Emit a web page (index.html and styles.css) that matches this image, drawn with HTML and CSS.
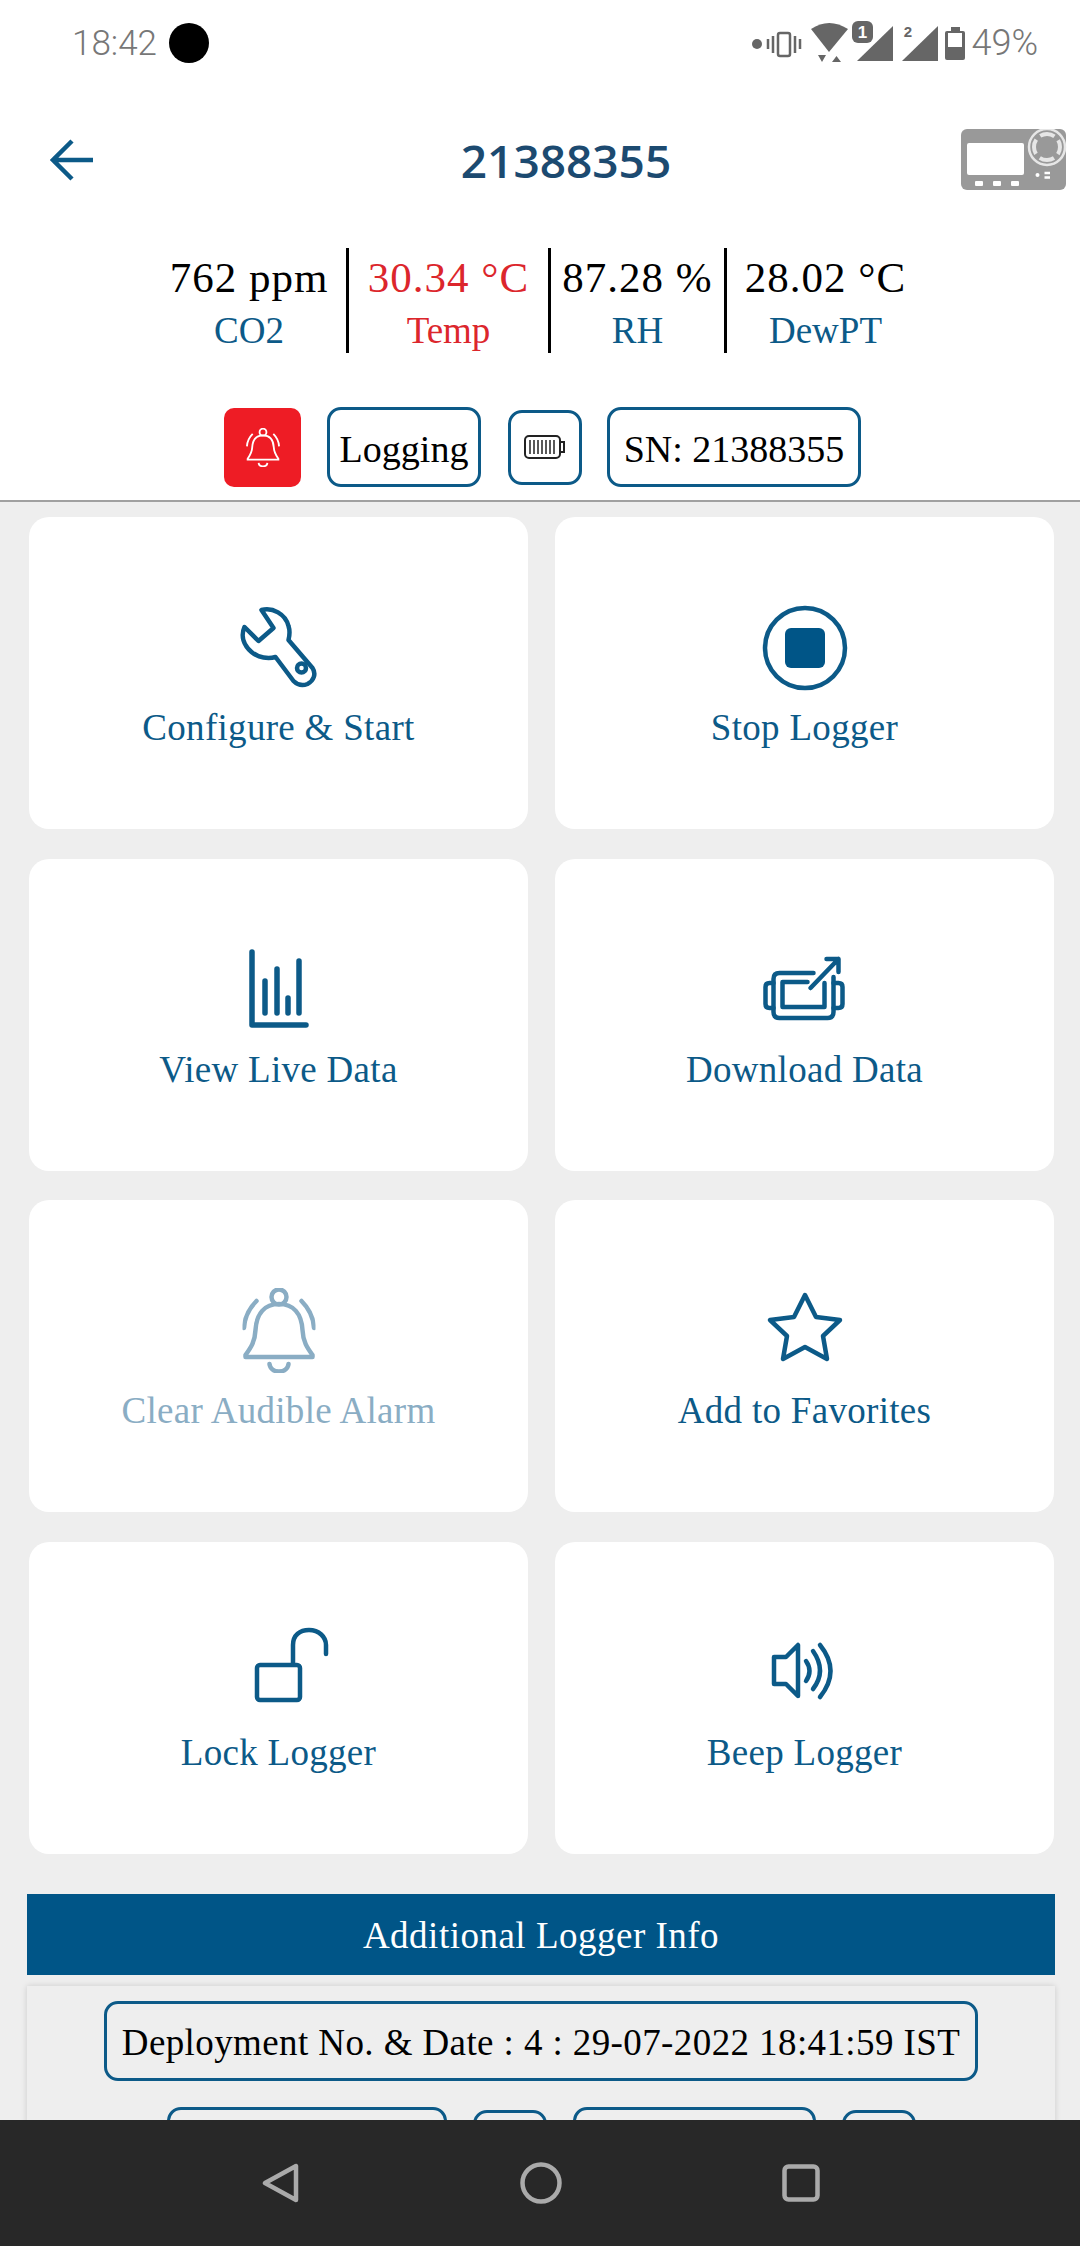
FILE: index.html
```html
<!DOCTYPE html>
<html>
<head>
    <title>21388355</title>
    <link rel="stylesheet" href="styles.css">
</head>
<body>
    <svg class="defs" width="0" height="0">
        <symbol id="bell" viewBox="0 0 73 85">
            <circle cx="36.5" cy="9" r="7.5"/>
            <path d="M36.5 16C22 16 14 26 13 42C12.5 54 8 60 3 67V69H70V67C65 60 60.5 54 60 42C59 26 51 16 36.5 16Z"/>
            <path d="M27 76C28 86 45 86 46 76"/>
            <path d="M14 13C6 21 2 30 1.5 40M59 13C67 21 71 30 71.5 40"/>
        </symbol>
    </svg>

    <div class="phone">
        <header class="top">
            <div class="statusbar">
                <div class="status-left">
                    <span class="clock">18:42</span>
                    <span class="dot"></span>
                </div>
                <div class="status-right">
                    <svg class="status-icons" width="216" height="44" viewBox="752 20 216 44">
                        <circle cx="757" cy="43" r="5" fill="#666"/>
                        <path d="M768 38V48M773 35V52M795 35V52M800 38V48" stroke="#666" stroke-width="2.5" fill="none"/>
                        <rect x="778" y="32" width="12" height="23" rx="2" stroke="#666" stroke-width="2.5" fill="none"/>
                        <path d="M811 28Q829 16 848 28L829 51Z" fill="#666"/>
                        <path d="M818 54H826L822 61ZM832 61L836.5 55L841 61Z" fill="#666"/>
                        <rect x="852" y="20" width="21" height="22" rx="6" fill="#666"/>
                        <text class="sim-one" x="862.5" y="37">1</text>
                        <path d="M893 25V60H857Z" fill="#666"/>
                        <text class="sim-two" x="908" y="36">2</text>
                        <path d="M938 25V60H902Z" fill="#666"/>
                        <rect x="945" y="30" width="20" height="29" rx="2" fill="#666"/>
                        <rect x="951" y="26" width="9" height="5" fill="#666"/>
                        <rect x="948" y="32" width="14" height="14" fill="#fff"/>
                    </svg>
                    <span class="battery-text">49%</span>
                </div>
            </div>

            <nav class="titlebar">
                <svg class="back" width="44" height="42" viewBox="0 0 44 42">
                    <path d="M43 21H4M22 2L3 21L22 40" stroke="#0c5a88" stroke-width="4.5" fill="none"/>
                </svg>
                <h1 class="title">21388355</h1>
                <svg class="device" width="106" height="62" viewBox="0 0 106 62">
                    <rect width="105" height="61" rx="6" fill="#999"/>
                    <rect x="6" y="14" width="57" height="32" rx="2" fill="#fff"/>
                    <circle cx="86" cy="18" r="18" fill="#999" stroke="#e6e6e6" stroke-width="2.5"/>
                    <circle cx="86" cy="18" r="13" fill="none" stroke="#e6e6e6" stroke-width="4" stroke-dasharray="15 5.42" stroke-dashoffset="7.5"/>
                    <rect x="14" y="52" width="8" height="5" rx="1" fill="#fff"/>
                    <rect x="32" y="52" width="8" height="5" rx="1" fill="#fff"/>
                    <rect x="50" y="52" width="8" height="5" rx="1" fill="#fff"/>
                    <circle cx="76.5" cy="46" r="2" fill="#fff"/>
                    <path d="M83.5 44H89M83.5 48.5H89" stroke="#fff" stroke-width="2.5"/>
                </svg>
            </nav>

            <div class="readings">
                <div class="reading">
                    <div class="value">762 ppm</div>
                    <div class="name">CO2</div>
                </div>
                <div class="reading alarm">
                    <div class="value">30.34 °C</div>
                    <div class="name">Temp</div>
                </div>
                <div class="reading">
                    <div class="value">87.28 %</div>
                    <div class="name">RH</div>
                </div>
                <div class="reading">
                    <div class="value">28.02 °C</div>
                    <div class="name">DewPT</div>
                </div>
            </div>

            <div class="chips">
                <div class="alarm-chip">
                    <svg class="line-white" width="34" height="39"><use href="#bell"/></svg>
                </div>
                <div class="chip logging-chip">Logging</div>
                <div class="chip battery-chip">
                    <svg width="42" height="24" viewBox="0 0 42 24">
                        <rect x="1" y="1" width="35" height="22" rx="4" fill="none" stroke="#222" stroke-width="2"/>
                        <path d="M6 5V19M10 5V19M14 5V19M18 5V19M22 5V19M26 5V19M30 5V19" stroke="#222" stroke-width="1.5"/>
                        <path d="M36 7H40V17H36" fill="none" stroke="#222" stroke-width="2"/>
                    </svg>
                </div>
                <div class="chip sn-chip">SN: 21388355</div>
            </div>
        </header>

        <main class="content">
            <div class="actions">
                <div class="card">
                    <svg class="icon" viewBox="0 0 90 90">
                        <g transform="translate(-3.5 -6)">
                            <path d="M31 15C42 12 55 19 58 31C60 37 59 41 58 45L82 73C86 79 83 86 77 89C72 91 67 90 63 86L45 62C38 64 28 63 21 57C13 50 10 41 14 32L28 46L43 33Z"/>
                            <circle cx="71" cy="73" r="4.5"/>
                        </g>
                    </svg>
                    <div class="label">Configure &amp; Start</div>
                </div>
                <div class="card">
                    <svg class="icon" viewBox="0 0 90 90">
                        <circle cx="45" cy="47" r="40"/>
                        <rect class="solid" x="25" y="27" width="40" height="40" rx="6"/>
                    </svg>
                    <div class="label">Stop Logger</div>
                </div>
                <div class="card">
                    <svg class="icon thick" viewBox="0 0 90 90">
                        <path d="M18 9V82H72M31 38V70M43 26V70M54 55V70M65 18V70"/>
                    </svg>
                    <div class="label">View Live Data</div>
                </div>
                <div class="card">
                    <svg class="icon" viewBox="0 0 90 90">
                        <g transform="translate(-4.5 2)">
                            <path d="M58 28H24Q18 28 18 34V67Q18 73 24 73H72Q78 73 78 67V32"/>
                            <path d="M52 37H27V62H69V38"/>
                            <path d="M18 38H14Q10 38 10 42V59Q10 63 14 63H18M78 38H83Q87 38 87 42V59Q87 63 83 63H78"/>
                            <path d="M55 43L83 14M71 14H83V27"/>
                        </g>
                    </svg>
                    <div class="label">Download Data</div>
                </div>
                <div class="card muted">
                    <svg class="icon" viewBox="0 0 90 90">
                        <use href="#bell" x="8.5" y="4" width="73" height="85"/>
                    </svg>
                    <div class="label">Clear Audible Alarm</div>
                </div>
                <div class="card">
                    <svg class="icon" viewBox="0 0 90 90">
                        <g transform="translate(9 8)">
                            <path d="M36 3L47 25L71 28L54 44L58 67L36 55L14 67L18 44L1 28L25 25Z"/>
                        </g>
                    </svg>
                    <div class="label">Add to Favorites</div>
                </div>
                <div class="card">
                    <svg class="icon" viewBox="0 0 90 90">
                        <rect x="23" y="39" width="43" height="35" rx="3"/>
                        <path d="M59 38V19C59 9 66 4 75 4C85 4 92 11 92 19V28"/>
                    </svg>
                    <div class="label">Lock Logger</div>
                </div>
                <div class="card">
                    <svg class="icon" viewBox="0 0 90 90">
                        <g transform="translate(12 17)">
                            <path d="M2 14H14L26 2V53L14 41H2Z"/>
                            <path d="M34 18Q41 28 34 38M41 8Q55 28 41 46M48 2Q69 28 48 54"/>
                        </g>
                    </svg>
                    <div class="label">Beep Logger</div>
                </div>
            </div>

            <div class="info-head">Additional Logger Info</div>
            <div class="info-panel">
                <div class="chip info-chip">Deployment No. &amp; Date : 4 : 29-07-2022 18:41:59 IST</div>
                <div class="info-row">
                    <div class="chip stub w280"></div>
                    <div class="chip stub low w74"></div>
                    <div class="chip stub w243"></div>
                    <div class="chip stub low w74"></div>
                </div>
            </div>
        </main>

        <footer class="navbar">
            <svg width="38" height="40" viewBox="0 0 38 40">
                <path d="M35 3V37L4 20Z" fill="none" stroke="#aaa" stroke-width="4.5" stroke-linejoin="round"/>
            </svg>
            <svg width="42" height="42" viewBox="0 0 42 42">
                <circle cx="21" cy="21" r="18.5" fill="none" stroke="#aaa" stroke-width="4.5"/>
            </svg>
            <svg width="38" height="38" viewBox="0 0 38 38">
                <rect x="2.5" y="2.5" width="33" height="33" rx="4" fill="none" stroke="#aaa" stroke-width="4.5"/>
            </svg>
        </footer>
    </div>
</body>
</html>
```

FILE: styles.css
```css
* {
    box-sizing: border-box;
}
body {
    margin: 0;
    background: #eee;
    font-family: "Liberation Serif", serif;
}
.defs {
    display: none;
}
.phone {
    width: 1080px;
    height: 2246px;
    display: flex;
    flex-direction: column;
    overflow: hidden;
}

/* top white block */
.top {
    background: white;
    height: 502px;
    border-bottom: 2px solid #a0a0a0;
    flex: none;
}
.statusbar {
    height: 86px;
    display: flex;
    justify-content: space-between;
    align-items: center;
    padding: 0 42px 0 72px;
}
.status-left {
    display: flex;
    align-items: center;
    gap: 12px;
}
.clock {
    font: 300 35px Roboto, sans-serif;
    color: #777;
}
.dot {
    width: 40px;
    height: 40px;
    border-radius: 50%;
    background: black;
}
.status-right {
    display: flex;
    align-items: center;
    gap: 3px;
}
.battery-text {
    font: 300 36px Roboto, sans-serif;
    color: #777;
}
.sim-one {
    font: 700 17px "Liberation Sans", sans-serif;
    fill: white;
    text-anchor: middle;
}
.sim-two {
    font: 700 15px "Liberation Sans", sans-serif;
    fill: #666;
    text-anchor: middle;
}
.titlebar {
    height: 148px;
    display: flex;
    justify-content: space-between;
    align-items: center;
    padding: 0 13px 0 50px;
    position: relative;
}
.title {
    position: absolute;
    left: 52px;
    right: 0;
    margin: 0;
    text-align: center;
    font: 600 46px "Open Sans", sans-serif;
    color: #1c4a70;
}
.readings {
    display: grid;
    grid-template-columns: 197px 202px 176px 197px;
    justify-content: center;
    margin-top: 14px;
    padding-right: 4px;
}
.reading {
    height: 105px;
    padding-top: 4px;
    border-right: 3px solid black;
    text-align: center;
    color: black;
}
.reading:last-child {
    border-right: none;
}
.value {
    font-size: 43px;
    line-height: 52px;
    letter-spacing: 1px;
    white-space: nowrap;
}
.name {
    font-size: 37px;
    line-height: 53px;
    color: #0c5a88;
}
.alarm .value,
.alarm .name {
    color: #dc262c;
}
.chips {
    display: flex;
    justify-content: center;
    align-items: center;
    gap: 26px;
    margin-top: 54px;
    padding-left: 5px;
}
.alarm-chip {
    width: 77px;
    height: 79px;
    background: #ee1c25;
    border-radius: 10px;
    display: flex;
    align-items: center;
    justify-content: center;
}
.line-white {
    fill: none;
    stroke: white;
    stroke-width: 4;
}
.chip {
    height: 80px;
    border: 3px solid #0c5a88;
    border-radius: 14px;
    display: flex;
    align-items: center;
    justify-content: center;
    font-size: 38px;
    color: black;
    white-space: nowrap;
}
.logging-chip,
.sn-chip {
    padding-top: 3px;
}
.logging-chip {
    width: 154px;
    margin-right: 1px;
}
.sn-chip {
    width: 254px;
    margin-left: -1px;
}
.battery-chip {
    width: 74px;
    height: 75px;
}

/* scrolling part */
.content {
    flex: 1;
    min-height: 0;
    overflow: hidden;
    padding: 15px 25px 0 27px;
}
.actions {
    display: grid;
    grid-template-columns: 499px 499px;
    gap: 29.5px 27px;
    padding: 0 0 0 2px;
}
.card {
    height: 312px;
    background: white;
    border-radius: 20px;
    padding-top: 84px;
    text-align: center;
}
.icon {
    display: block;
    width: 90px;
    height: 90px;
    margin: 0 auto;
    overflow: visible;
    fill: none;
    stroke: #0c5a88;
    stroke-width: 4.5;
    stroke-linejoin: round;
    stroke-linecap: round;
}
.icon.thick {
    stroke-width: 5.5;
}
.icon .solid {
    fill: #005587;
    stroke: none;
}
.label {
    margin-top: 15px;
    font-size: 37px;
    line-height: 44px;
    letter-spacing: 0.3px;
    color: #0c5a88;
}
.muted .icon {
    stroke: #8aadc4;
}
.muted .label {
    color: #8aadc4;
}
.info-head {
    height: 81px;
    margin-top: 40px;
    padding-top: 3px;
    background: #005587;
    color: white;
    display: flex;
    align-items: center;
    justify-content: center;
    font-size: 37px;
    letter-spacing: 0.5px;
}
.info-panel {
    margin-top: 11px;
    height: 220px;
    background: #eee;
    box-shadow: 0 0 6px rgba(0,0,0,0.15);
    padding-top: 15px;
}
.info-chip {
    width: 874px;
    margin: 0 0 0 77px;
    padding-top: 3px;
    font-size: 37px;
    letter-spacing: 0.4px;
}
.info-row {
    display: flex;
    align-items: flex-start;
    gap: 26px;
    margin: 26px 0 0 140px;
}
.stub.low {
    margin-top: 3px;
}
.w280 {
    width: 280px;
}
.w74 {
    width: 74px;
}
.w243 {
    width: 243px;
}

.navbar {
    flex: none;
    height: 126px;
    background: #282828;
    display: flex;
    align-items: center;
    justify-content: space-between;
    padding: 0 260px 0 261px;
}
```
